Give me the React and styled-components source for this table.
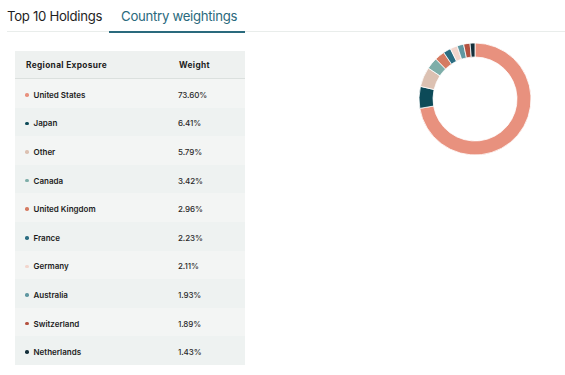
import React from "react";
import styled, { createGlobalStyle } from "styled-components";

const Global = createGlobalStyle`
  html, body { margin: 0; padding: 0; background: #ffffff; }
  body { font-family: Inter, "Noto Sans", sans-serif; color: #1d1d1d; }
  *, *::before, *::after { box-sizing: border-box; }
`;

const data = [
  { name: "United States", weight: 73.6, color: "#e8917e" },
  { name: "Japan", weight: 6.41, color: "#0c4a58" },
  { name: "Other", weight: 5.79, color: "#dcc1b2" },
  { name: "Canada", weight: 3.42, color: "#7eaea9" },
  { name: "United Kingdom", weight: 2.96, color: "#d57b62" },
  { name: "France", weight: 2.23, color: "#2b6d82" },
  { name: "Germany", weight: 2.11, color: "#f2d5cc" },
  { name: "Australia", weight: 1.93, color: "#5f97a1" },
  { name: "Switzerland", weight: 1.89, color: "#b4513f" },
  { name: "Netherlands", weight: 1.43, color: "#142f3a" },
];

const Page = styled.div`
  padding: 0 0 0 7px;
  width: 565px;
`;

const Tabs = styled.div`
  display: flex;
  align-items: flex-end;
  border-bottom: 1.5px solid #e9edeb;
  height: 32px;
`;

const Tab = styled.div`
  font-size: 13.2px;
  line-height: 16px;
  letter-spacing: -0.3px;
  color: ${(p) => (p.$active ? "#2a6a7d" : "#1f1f1f")};
  padding: 0 ${(p) => (p.$active ? "8px" : "0")} 7px ${(p) => (p.$active ? "12px" : "0")};
  margin-left: ${(p) => (p.$active ? "7px" : "0")};
  border-bottom: 2px solid ${(p) => (p.$active ? "#2a6a7d" : "transparent")};
  margin-bottom: -1.5px;
`;

const Content = styled.div`
  display: flex;
  align-items: flex-start;
  padding: 19px 0 0 8px;
`;

const Table = styled.div`
  width: 230px;
  display: flex;
  flex-direction: column;
`;

const HeaderRow = styled.div`
  display: grid;
  grid-template-columns: 153px 1fr;
  align-items: center;
  height: 28px;
  background: #eef1f0;
  border-bottom: 1px solid #dbe0de;
  padding-left: 11px;
  font-size: 8.3px;
  font-weight: 700;
  letter-spacing: 0.35px;
  color: #222;
`;

const Row = styled.div`
  display: grid;
  grid-template-columns: 153px 1fr;
  align-items: center;
  height: 28.6px;
  padding: 3px 0 0 10px;
  background: ${(p) => (p.$alt ? "#eef2f1" : "#f3f5f4")};
  font-size: 8px;
`;

const Country = styled.div`
  display: flex;
  align-items: center;
  gap: 5px;
  font-weight: 600;
  color: #1c1c1c;
`;

const Dot = styled.span`
  width: 3.5px;
  height: 3.5px;
  border-radius: 50%;
  background: ${(p) => p.$color};
  flex: none;
`;

const Value = styled.div`
  color: #2a2a2a;
  font-weight: 500;
  letter-spacing: -0.1px;
`;

const ChartWrap = styled.div`
  margin-left: 174px;
  margin-top: -9px;
  width: 112px;
  height: 116px;
`;

function polar(cx, cy, r, a) {
  const rad = ((a - 90) * Math.PI) / 180;
  return [cx + r * Math.cos(rad), cy + r * Math.sin(rad)];
}

function arcPath(cx, cy, ro, ri, a0, a1) {
  const large = a1 - a0 > 180 ? 1 : 0;
  const [x0, y0] = polar(cx, cy, ro, a0);
  const [x1, y1] = polar(cx, cy, ro, a1);
  const [x2, y2] = polar(cx, cy, ri, a1);
  const [x3, y3] = polar(cx, cy, ri, a0);
  return `M${x0} ${y0} A${ro} ${ro} 0 ${large} 1 ${x1} ${y1} L${x2} ${y2} A${ri} ${ri} 0 ${large} 0 ${x3} ${y3} Z`;
}

function Donut() {
  const total = data.reduce((s, d) => s + d.weight, 0);
  let a = 0;
  const cx = 56, cy = 57, ro = 56, ri = 42;
  return (
    <svg width="112" height="116" viewBox="0 0 112 116">
      {data.map((d) => {
        const span = (d.weight / total) * 360;
        const p = arcPath(cx, cy, ro, ri, a, a + span);
        a += span;
        return <path key={d.name} d={p} fill={d.color} stroke="#ffffff" strokeWidth="0.8" />;
      })}
    </svg>
  );
}

export default function App() {
  return (
    <Page>
      <Global />
      <Tabs>
        <Tab>Top 10 Holdings</Tab>
        <Tab $active>Country weightings</Tab>
      </Tabs>
      <Content>
        <Table>
          <HeaderRow>
            <div>Regional Exposure</div>
            <div>Weight</div>
          </HeaderRow>
          {data.map((d, i) => (
            <Row key={d.name} $alt={i % 2 === 1}>
              <Country>
                <Dot $color={d.color} />
                {d.name}
              </Country>
              <Value>{d.weight.toFixed(2)}%</Value>
            </Row>
          ))}
        </Table>
        <ChartWrap>
          <Donut />
        </ChartWrap>
      </Content>
    </Page>
  );
}
